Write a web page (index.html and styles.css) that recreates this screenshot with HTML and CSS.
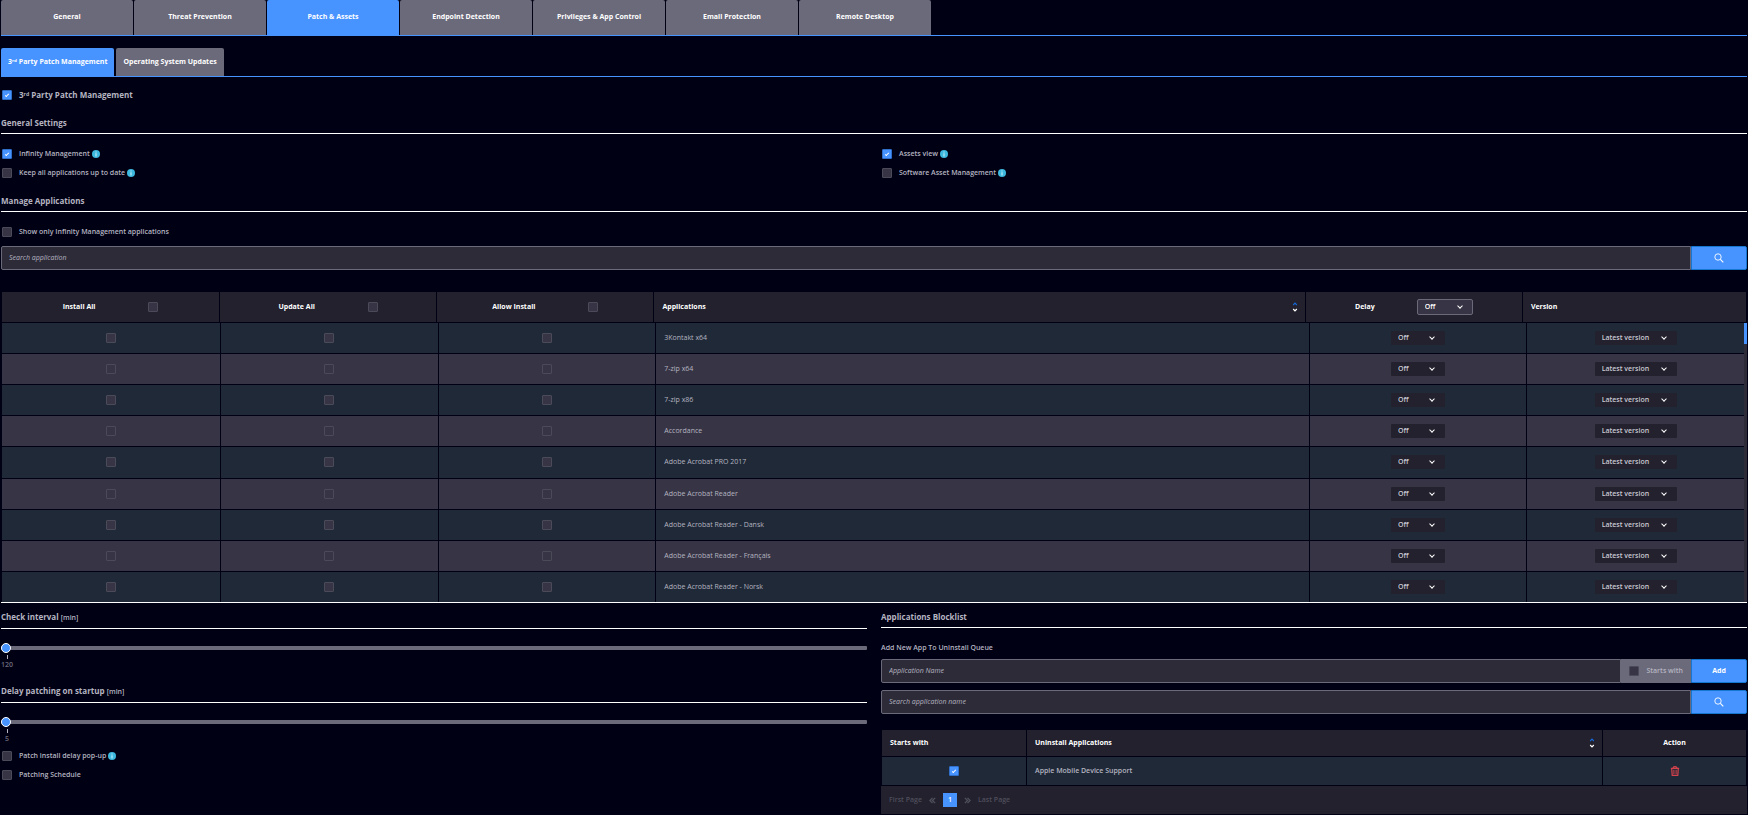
FILE: index.html
```html
<!DOCTYPE html>
<html lang="en">
<head>
    <meta charset="UTF-8">
    <meta name="viewport" content="width=device-width, initial-scale=1.0">
    <title>Patch &amp; Assets</title>
    <link rel="stylesheet" href="styles.css">
</head>
<body>
    <!-- Shared icons -->
    <svg class="sprite" aria-hidden="true">
        <symbol id="icon-search" viewBox="0 0 10 10">
            <circle cx="4" cy="4" r="3.2" fill="none" stroke="currentColor" stroke-width="0.9"/>
            <path d="M6.4 6.4L9.3 9.3" stroke="currentColor" stroke-width="1.1"/>
        </symbol>
        <symbol id="icon-info" viewBox="0 0 8 8">
            <circle cx="4" cy="4" r="4" fill="#3db8de"/>
            <path d="M4 1.6v1M4 3.2v3.2" stroke="#b9ecf8" stroke-width="1.2"/>
        </symbol>
        <symbol id="icon-sort" viewBox="0 0 6 12">
            <path d="M1.2 4L3 2.2L4.8 4" fill="none" stroke="#1668d8" stroke-width="1.2"/>
            <path d="M1.2 8L3 9.8L4.8 8" fill="none" stroke="#ffffff" stroke-width="1.2"/>
        </symbol>
        <symbol id="icon-trash" viewBox="0 0 10 10">
            <path d="M0.8 2.4h8.4M3 2.2C3 0.2 7 0.2 7 2.2M1.7 2.6l0.5 6.8h5.6l0.5-6.8" fill="none" stroke="#d4434d" stroke-width="1.2"/>
            <path d="M3.9 3.8v4.4M6.1 3.8v4.4" stroke="#d4434d" stroke-width="1"/>
        </symbol>
        <symbol id="icon-prev" viewBox="0 0 8 8">
            <path d="M4 1L1 4L4 7M7 1L4 4L7 7" fill="none" stroke="currentColor" stroke-width="1.6"/>
        </symbol>
        <symbol id="icon-next" viewBox="0 0 8 8">
            <path d="M1 1L4 4L1 7M4 1L7 4L4 7" fill="none" stroke="currentColor" stroke-width="1.6"/>
        </symbol>
    </svg>

    <nav class="tabs">
        <button type="button" class="tab">General</button>
        <button type="button" class="tab">Threat Prevention</button>
        <button type="button" class="tab active">Patch &amp; Assets</button>
        <button type="button" class="tab">Endpoint Detection</button>
        <button type="button" class="tab">Privileges &amp; App Control</button>
        <button type="button" class="tab">Email Protection</button>
        <button type="button" class="tab">Remote Desktop</button>
    </nav>

    <nav class="subtabs">
        <button type="button" class="subtab active">3ʳᵈ Party Patch Management</button>
        <button type="button" class="subtab">Operating System Updates</button>
    </nav>

    <main>
        <label class="check check-title"><input type="checkbox" checked> 3ʳᵈ Party Patch Management</label>

        <h2 class="section-title">General Settings</h2>
        <div class="columns settings">
            <div class="check-list">
                <label class="check"><input type="checkbox" checked> <span>Infinity Management</span> <svg class="info"><use href="#icon-info"/></svg></label>
                <label class="check"><input type="checkbox"> <span>Keep all applications up to date</span> <svg class="info"><use href="#icon-info"/></svg></label>
            </div>
            <div class="check-list">
                <label class="check"><input type="checkbox" checked> <span>Assets view</span> <svg class="info"><use href="#icon-info"/></svg></label>
                <label class="check"><input type="checkbox"> <span>Software Asset Management</span> <svg class="info"><use href="#icon-info"/></svg></label>
            </div>
        </div>

        <h2 class="section-title">Manage Applications</h2>
        <label class="check show-only"><input type="checkbox"> <span>Show only Infinity Management applications</span></label>
        <form class="input-group">
            <input type="text" placeholder="Search application" aria-label="Search application">
            <button type="button" class="btn" aria-label="Search"><svg class="search-icon"><use href="#icon-search"/></svg></button>
        </form>

        <div class="apps">
            <table class="apps-table">
                <thead>
                    <tr>
                        <th><label class="th-control">Install All <input type="checkbox"></label></th>
                        <th><label class="th-control">Update All <input type="checkbox"></label></th>
                        <th><label class="th-control">Allow Install <input type="checkbox"></label></th>
                        <th class="sortable">Applications <svg class="sort"><use href="#icon-sort"/></svg></th>
                        <th><label class="th-control th-delay">Delay <span class="select select-head"><select><option>Off</option></select></span></label></th>
                        <th class="left">Version</th>
                    </tr>
                </thead>
                <tbody>
                    <tr>
                        <td><input type="checkbox" aria-label="Install"></td>
                        <td><input type="checkbox" aria-label="Update"></td>
                        <td><input type="checkbox" aria-label="Allow install"></td>
                        <td class="left">3Kontakt x64</td>
                        <td><span class="select"><select aria-label="Delay"><option>Off</option></select></span></td>
                        <td><span class="select select-wide"><select aria-label="Version"><option>Latest version</option></select></span></td>
                    </tr>
                    <tr>
                        <td><input type="checkbox" aria-label="Install"></td>
                        <td><input type="checkbox" aria-label="Update"></td>
                        <td><input type="checkbox" aria-label="Allow install"></td>
                        <td class="left">7-zip x64</td>
                        <td><span class="select"><select aria-label="Delay"><option>Off</option></select></span></td>
                        <td><span class="select select-wide"><select aria-label="Version"><option>Latest version</option></select></span></td>
                    </tr>
                    <tr>
                        <td><input type="checkbox" aria-label="Install"></td>
                        <td><input type="checkbox" aria-label="Update"></td>
                        <td><input type="checkbox" aria-label="Allow install"></td>
                        <td class="left">7-zip x86</td>
                        <td><span class="select"><select aria-label="Delay"><option>Off</option></select></span></td>
                        <td><span class="select select-wide"><select aria-label="Version"><option>Latest version</option></select></span></td>
                    </tr>
                    <tr>
                        <td><input type="checkbox" aria-label="Install"></td>
                        <td><input type="checkbox" aria-label="Update"></td>
                        <td><input type="checkbox" aria-label="Allow install"></td>
                        <td class="left">Accordance</td>
                        <td><span class="select"><select aria-label="Delay"><option>Off</option></select></span></td>
                        <td><span class="select select-wide"><select aria-label="Version"><option>Latest version</option></select></span></td>
                    </tr>
                    <tr>
                        <td><input type="checkbox" aria-label="Install"></td>
                        <td><input type="checkbox" aria-label="Update"></td>
                        <td><input type="checkbox" aria-label="Allow install"></td>
                        <td class="left">Adobe Acrobat PRO 2017</td>
                        <td><span class="select"><select aria-label="Delay"><option>Off</option></select></span></td>
                        <td><span class="select select-wide"><select aria-label="Version"><option>Latest version</option></select></span></td>
                    </tr>
                    <tr>
                        <td><input type="checkbox" aria-label="Install"></td>
                        <td><input type="checkbox" aria-label="Update"></td>
                        <td><input type="checkbox" aria-label="Allow install"></td>
                        <td class="left">Adobe Acrobat Reader</td>
                        <td><span class="select"><select aria-label="Delay"><option>Off</option></select></span></td>
                        <td><span class="select select-wide"><select aria-label="Version"><option>Latest version</option></select></span></td>
                    </tr>
                    <tr>
                        <td><input type="checkbox" aria-label="Install"></td>
                        <td><input type="checkbox" aria-label="Update"></td>
                        <td><input type="checkbox" aria-label="Allow install"></td>
                        <td class="left">Adobe Acrobat Reader - Dansk</td>
                        <td><span class="select"><select aria-label="Delay"><option>Off</option></select></span></td>
                        <td><span class="select select-wide"><select aria-label="Version"><option>Latest version</option></select></span></td>
                    </tr>
                    <tr>
                        <td><input type="checkbox" aria-label="Install"></td>
                        <td><input type="checkbox" aria-label="Update"></td>
                        <td><input type="checkbox" aria-label="Allow install"></td>
                        <td class="left">Adobe Acrobat Reader - Français</td>
                        <td><span class="select"><select aria-label="Delay"><option>Off</option></select></span></td>
                        <td><span class="select select-wide"><select aria-label="Version"><option>Latest version</option></select></span></td>
                    </tr>
                    <tr>
                        <td><input type="checkbox" aria-label="Install"></td>
                        <td><input type="checkbox" aria-label="Update"></td>
                        <td><input type="checkbox" aria-label="Allow install"></td>
                        <td class="left">Adobe Acrobat Reader - Norsk</td>
                        <td><span class="select"><select aria-label="Delay"><option>Off</option></select></span></td>
                        <td><span class="select select-wide"><select aria-label="Version"><option>Latest version</option></select></span></td>
                    </tr>
                </tbody>
            </table>
            <div class="scrollbar"><div class="scrollbar-thumb"></div></div>
        </div>

        <div class="columns bottom">
            <section>
                <h2 class="section-title"><label for="interval">Check interval <small>[min]</small></label></h2>
                <div class="slider">
                    <input type="range" id="interval" min="120" max="1440" value="120">
                    <span class="tick">120</span>
                </div>

                <h2 class="section-title"><label for="startup">Delay patching on startup <small>[min]</small></label></h2>
                <div class="slider">
                    <input type="range" id="startup" min="5" max="60" value="5">
                    <span class="tick">5</span>
                </div>

                <div class="check-list patch-options">
                    <label class="check"><input type="checkbox"> <span>Patch install delay pop-up</span> <svg class="info"><use href="#icon-info"/></svg></label>
                    <label class="check"><input type="checkbox"> <span>Patching Schedule</span></label>
                </div>
            </section>

            <section>
                <h2 class="section-title">Applications Blocklist</h2>
                <label class="field-label" for="newApp">Add New App To Uninstall Queue</label>
                <form class="input-group">
                    <input type="text" id="newApp" placeholder="Application Name">
                    <label class="addon"><input type="checkbox"> Starts with</label>
                    <button type="button" class="btn">Add</button>
                </form>
                <form class="input-group">
                    <input type="text" placeholder="Search application name" aria-label="Search application name">
                    <button type="button" class="btn" aria-label="Search"><svg class="search-icon"><use href="#icon-search"/></svg></button>
                </form>

                <table class="block-table">
                    <thead>
                        <tr>
                            <th class="left">Starts with</th>
                            <th class="sortable">Uninstall Applications <svg class="sort"><use href="#icon-sort"/></svg></th>
                            <th>Action</th>
                        </tr>
                    </thead>
                    <tbody>
                        <tr>
                            <td><input type="checkbox" aria-label="Starts with" checked></td>
                            <td class="left">Apple Mobile Device Support</td>
                            <td><button type="button" class="icon-btn" aria-label="Delete"><svg class="trash"><use href="#icon-trash"/></svg></button></td>
                        </tr>
                    </tbody>
                </table>
                <div class="pagination">
                    <button type="button">First Page</button>
                    <button type="button" aria-label="Previous"><svg class="page-arrow"><use href="#icon-prev"/></svg></button>
                    <button type="button" class="current">1</button>
                    <button type="button" aria-label="Next"><svg class="page-arrow"><use href="#icon-next"/></svg></button>
                    <button type="button">Last Page</button>
                </div>
            </section>
        </div>
    </main>
</body>
</html>
```
FILE: styles.css
```css
* {
    box-sizing: border-box;
}
body {
    margin: 0;
    padding: 0 1px;
    background: #000014;
    color: #b5b4c0;
    font-family: 'Open Sans', 'Noto Sans', sans-serif;
    font-size: 7px;
    line-height: 12px;
}
button, input, select {
    font: inherit;
    margin: 0;
}
button {
    border: none;
    cursor: pointer;
}
svg {
    display: block;
    flex: none;
}
.sprite {
    position: absolute;
    width: 0;
    height: 0;
}

/* Tabs */
.tabs {
    display: flex;
    gap: 1px;
    border-bottom: 1px solid #4793ff;
}
.tab, .subtab {
    background: #6b6a7b;
    color: #ffffff;
    font-weight: 700;
    border-radius: 2px 2px 0 0;
}
.tab {
    width: 132px;
    height: 35px;
    padding: 0 0 2px;
}
.subtabs {
    display: flex;
    gap: 2px;
    margin-top: 12px;
    border-bottom: 1px solid #4793ff;
}
.subtab {
    height: 28px;
    padding: 0 7px;
}
.tab.active, .subtab.active {
    background: #4793ff;
}

/* Checkboxes */
input[type="checkbox"] {
    appearance: none;
    display: grid;
    place-items: center;
    flex: none;
    width: 10px;
    height: 10px;
    background: #373545;
    border: 1px solid #4b4a59;
    border-radius: 1px;
}
input[type="checkbox"]:checked {
    background: #4793ff;
    border-color: #2f6fc9;
}
input[type="checkbox"]:checked::after {
    content: "";
    width: 3px;
    height: 1px;
    border-left: 1px solid #ffffff;
    border-bottom: 1px solid #ffffff;
    transform: rotate(-45deg);
}
.check {
    display: flex;
    align-items: center;
    width: fit-content;
    height: 12px;
    padding-left: 1px;
    font-weight: 600;
}
.check input {
    margin-right: 7px;
}
.check-title {
    margin-top: 12px;
    font-size: 8px;
    font-weight: 700;
}
.check-list {
    display: flex;
    flex-direction: column;
    gap: 7px;
}
.info {
    width: 8px;
    height: 8px;
    margin-left: 2px;
}

.section-title {
    margin: 16px 0 0;
    padding-bottom: 4px;
    border-bottom: 1px solid #ffffff;
    font-size: 8px;
    font-weight: 700;
    line-height: 12px;
}
.section-title small {
    font-size: 7px;
    font-weight: 600;
}
.columns {
    display: grid;
    grid-template-columns: 1fr 1fr;
    gap: 14px;
}
.settings {
    margin-top: 14px;
}
.show-only {
    margin: 14px 0 8px;
}

/* Inputs */
.input-group {
    display: flex;
    height: 24px;
}
.input-group + .input-group {
    margin-top: 7px;
}
.input-group input[type="text"] {
    flex: 1;
    min-width: 0;
    padding: 0 7px;
    background: #2d2b38;
    color: #ffffff;
    border: 1px solid #6b6a7b;
    border-radius: 2px 0 0 2px;
}
.input-group input::placeholder {
    color: #b5b4c0;
    font-style: italic;
    opacity: 1;
}
.btn {
    display: flex;
    align-items: center;
    justify-content: center;
    width: 56px;
    background: #4793ff;
    color: #ffffff;
    border: 1px solid #1577cf;
    border-radius: 0 2px 2px 0;
    font-weight: 700;
}
.search-icon {
    width: 10px;
    height: 10px;
}
.addon {
    display: flex;
    align-items: center;
    gap: 7px;
    padding: 0 8px;
    background: #6b6a7b;
    font-weight: 600;
}

/* Tables */
table, thead, tbody {
    display: block;
}
tr {
    display: grid;
}
th, td {
    display: flex;
    align-items: center;
    justify-content: center;
    padding: 0;
    border-left: 1px solid #000014;
}
th:first-child, td:first-child {
    border-left: none;
}
th {
    background: #22212d;
    color: #ffffff;
    font-weight: 700;
}
td {
    background: #1f2937;
}
th.left, td.left {
    justify-content: flex-start;
    padding: 0 8px;
}
.sortable {
    justify-content: space-between;
    padding: 0 7px 0 8px;
}
.sort {
    width: 6px;
    height: 12px;
}
.apps {
    position: relative;
    margin-top: 22px;
    padding: 0 1px;
    border-bottom: 1px solid #ffffff;
}
.apps-table thead tr {
    grid-template-columns: 12.45% 12.45% 12.45% 37.35% 12.45% 1fr;
    height: 30px;
    margin-bottom: 1px;
}
.apps-table tbody {
    display: grid;
    grid-auto-rows: 1fr;
    gap: 1px;
    height: 279px;
    margin-right: 2px;
}
.apps-table tbody tr {
    grid-template-columns: 1fr 1fr 1fr 3fr 1fr 1fr;
}
.apps-table tbody tr:nth-child(even) td {
    background: #373545;
}
.th-control {
    display: flex;
    align-items: center;
    gap: 53px;
}
.th-delay {
    gap: 42px;
}

.select {
    position: relative;
    display: block;
    width: 54px;
    height: 14px;
}
.select select {
    appearance: none;
    display: block;
    width: 100%;
    height: 100%;
    padding: 0 7px;
    background: #22212d;
    color: #c9c8d2;
    border: none;
    border-radius: 1px;
    font-weight: 600;
}
.select::after {
    content: "";
    position: absolute;
    top: 4px;
    right: 11px;
    width: 3px;
    height: 3px;
    border-right: 1px solid #ffffff;
    border-bottom: 1px solid #ffffff;
    transform: rotate(45deg);
}
.select-wide {
    width: 82px;
}
.select-head {
    width: 56px;
    height: 16px;
}
.select-head select {
    background: #373545;
    color: #ffffff;
    border: 1px solid #6b6a7b;
    border-radius: 2px;
}
.select-head::after {
    top: 5px;
}

.scrollbar {
    position: absolute;
    top: 31px;
    right: 0;
    bottom: 0;
    width: 3px;
    background: #2d2b38;
}
.scrollbar-thumb {
    height: 21px;
    background: #4793ff;
}

/* Sliders */
.bottom .section-title:first-child {
    margin-top: 8px;
}
.slider {
    margin-top: 14px;
}
.slider input {
    appearance: none;
    display: block;
    width: 100%;
    height: 10px;
    background: transparent;
}
.slider input::-webkit-slider-runnable-track {
    height: 4px;
    background: #6b6a7b;
    border-radius: 1px;
}
.slider input::-webkit-slider-thumb {
    appearance: none;
    width: 10px;
    height: 10px;
    margin-top: -3px;
    background: #4793ff;
    border: 1px solid #ffffff;
    border-radius: 50%;
}
.tick {
    display: flex;
    flex-direction: column;
    align-items: center;
    width: 12px;
    margin-top: 2px;
    color: #6b6a7b;
    font-weight: 600;
    line-height: 12px;
}
.tick::before {
    content: "";
    width: 1px;
    height: 4px;
    background: #b5b4c0;
}
.slider + .section-title {
    margin-top: 14px;
}
.patch-options {
    margin-top: 5px;
}

/* Blocklist */
.field-label {
    display: block;
    margin: 14px 0 5px;
    font-weight: 600;
}
.block-table {
    margin: 16px 1px 0;
}
.block-table tr {
    grid-template-columns: 144px 1fr 144px;
    height: 26px;
    margin-bottom: 1px;
}
.block-table tbody tr {
    height: 28px;
}
.block-table td {
    font-weight: 600;
}
.icon-btn {
    padding: 0;
    background: none;
}
.trash {
    width: 10px;
    height: 10px;
}
.pagination {
    display: flex;
    align-items: center;
    gap: 7px;
    height: 28px;
    padding: 0 8px;
    background: #22212d;
}
.pagination button {
    padding: 0;
    background: none;
    color: #4f4e5c;
    font-weight: 600;
}
.pagination .current {
    width: 14px;
    height: 14px;
    background: #4793ff;
    color: #ffffff;
}
.page-arrow {
    width: 7px;
    height: 7px;
}
```
